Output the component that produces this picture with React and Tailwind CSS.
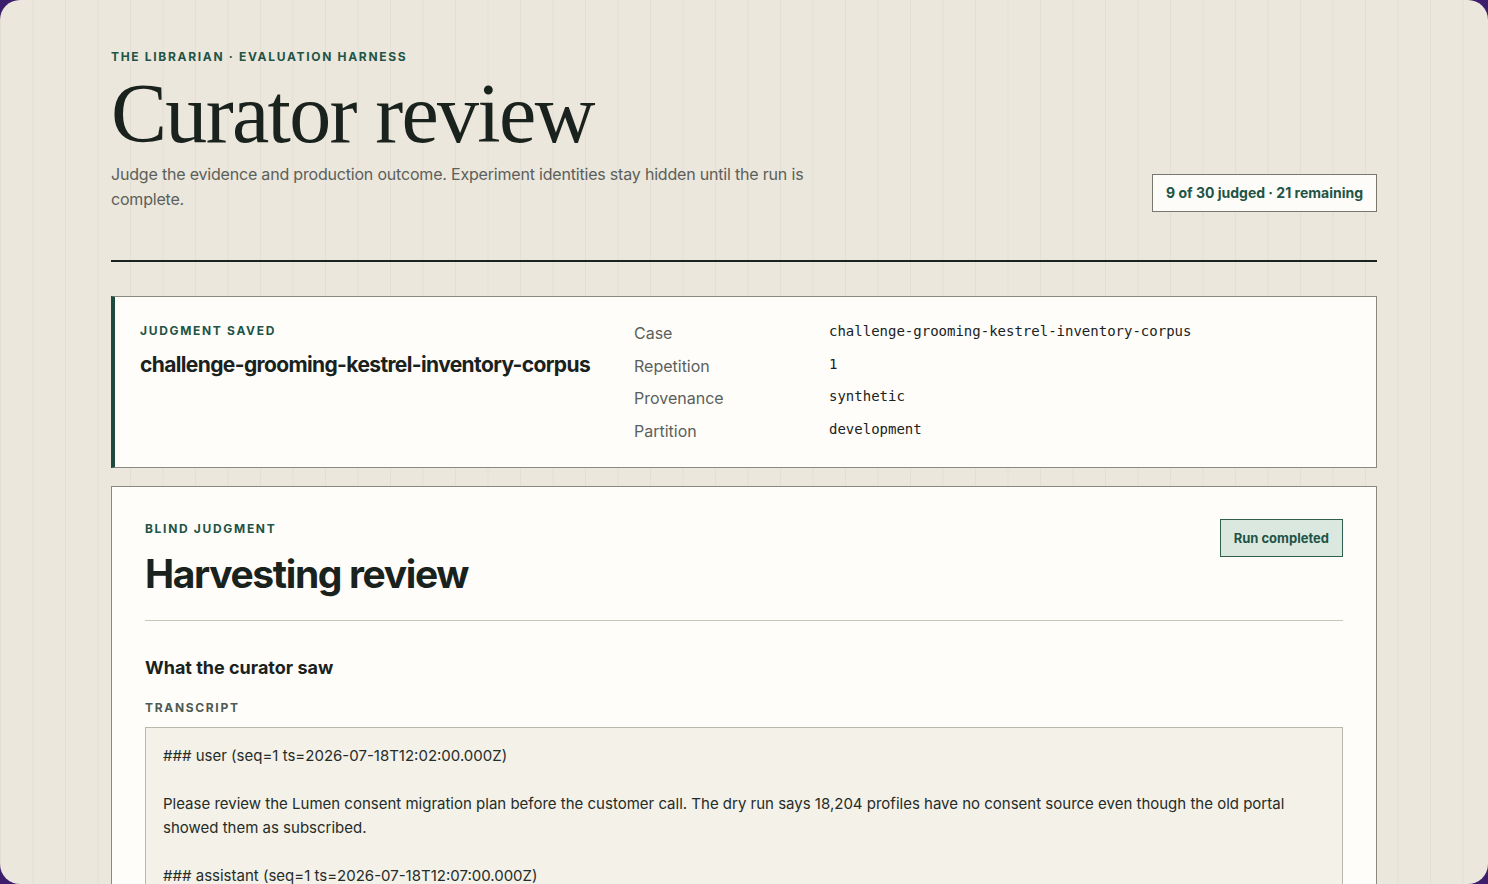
const facts = [
  ['Case', 'challenge-grooming-kestrel-inventory-corpus'],
  ['Repetition', '1'],
  ['Provenance', 'synthetic'],
  ['Partition', 'development'],
]

const transcript = `### user (seq=1 ts=2026-07-18T12:02:00.000Z)

Please review the Lumen consent migration plan before the customer call. The dry run says 18,204 profiles have no consent source even though the old portal showed them as subscribed.

### assistant (seq=1 ts=2026-07-18T12:07:00.000Z)`

const sans = { fontFamily: 'Inter, "Noto Sans", sans-serif' }

export default function App() {
  return (
    <div className="h-[884px] bg-[#3c1e6c]" style={sans}>
      <div className="h-full overflow-hidden rounded-[20px] bg-[#ebe7dc] bg-[linear-gradient(90deg,rgba(60,50,30,0.045)_1px,transparent_1px)] bg-[size:32.5px_100%]">
        <div className="mx-auto w-[1266px] pt-[49px]">
          <header className="flex items-end justify-between border-b-2 border-[#1c2420] pb-[48px]">
            <div>
              <div className="text-[12px] font-bold uppercase leading-4 tracking-[0.14em] text-[#1f5446]">
                The Librarian · Evaluation Harness
              </div>
              <h1
                className="mt-[7px] text-[84px] leading-[84px] tracking-[-0.02em] text-[#1a221e]"
                style={{ fontFamily: '"Liberation Serif", "DejaVu Serif", serif' }}
              >
                Curator review
              </h1>
              <p className="mt-[6px] max-w-[700px] text-[16px] leading-[25px] tracking-[-0.012em] text-[#5b605b]">
                Judge the evidence and production outcome. Experiment identities stay hidden until the run is complete.
              </p>
            </div>
            <div className="border-[1.5px] border-[#77776d] bg-[#fdfcf8] px-[13px] py-[8px] text-[14px] font-bold leading-5 text-[#1f5446]">
              9 of 30 judged · 21 remaining
            </div>
          </header>

          <section className="mt-[34px] grid grid-cols-[470px_1fr] gap-x-6 border-[1.5px] border-l-4 border-[#8a897f] border-l-[#1d4b3f] bg-[#fefdf9] pb-[24px] pl-[25px] pr-[25px] pt-[24px]">
            <div className="pt-[2px]">
              <div className="text-[12px] font-bold uppercase leading-4 tracking-[0.14em] text-[#1f5446]">
                Judgment saved
              </div>
              <div className="mt-3 whitespace-nowrap text-[21px] font-bold leading-7 tracking-[-0.03em] text-[#1a221e]">
                challenge-grooming-kestrel-inventory-corpus
              </div>
            </div>
            <dl className="grid grid-cols-[195px_1fr] items-start gap-y-[8.5px]">
              {facts.map(([k, v]) => (
                <div key={k} className="contents">
                  <dt className="text-[16px] leading-6 text-[#5b605b]">{k}</dt>
                  <dd
                    className="text-[14px] leading-5 text-[#1a221e]"
                    style={{ fontFamily: '"DejaVu Sans Mono", "Liberation Mono", monospace' }}
                  >
                    {v}
                  </dd>
                </div>
              ))}
            </dl>
          </section>

          <section className="mt-[18px] border-[1.5px] border-[#8a897f] bg-[#fefdf9] px-[33px] pb-10 pt-[34px]">
            <div className="flex items-start justify-between border-b border-[#c9c6b9] pb-[22px]">
              <div>
                <div className="text-[12px] font-bold uppercase leading-4 tracking-[0.14em] text-[#1f5446]">
                  Blind judgment
                </div>
                <h2 className="mt-[13px] text-[39px] font-bold leading-[48px] tracking-[-0.035em] text-[#1a221e]">
                  Harvesting review
                </h2>
              </div>
              <div className="-mt-[2px] border-[1.5px] border-[#2f5f4f] bg-[#dbe8e0] px-[13px] py-[8px] text-[13px] font-bold leading-5 text-[#1f5446]">
                Run completed
              </div>
            </div>

            <h3 className="mt-[33px] text-[18px] font-bold leading-7 text-[#1a221e]">
              What the curator saw
            </h3>
            <div className="mt-[18px] text-[12px] font-bold uppercase leading-4 tracking-[0.14em] text-[#4d5a53]">
              Transcript
            </div>
            <div className="mt-[11px] whitespace-pre-wrap border-[1.5px] border-[#bab8ab] bg-[#f3f1e8] px-[17px] pb-4 pt-[16px] text-[15px] leading-6 text-[#262c28]">
              {transcript}
            </div>
          </section>
        </div>
      </div>
    </div>
  )
}
